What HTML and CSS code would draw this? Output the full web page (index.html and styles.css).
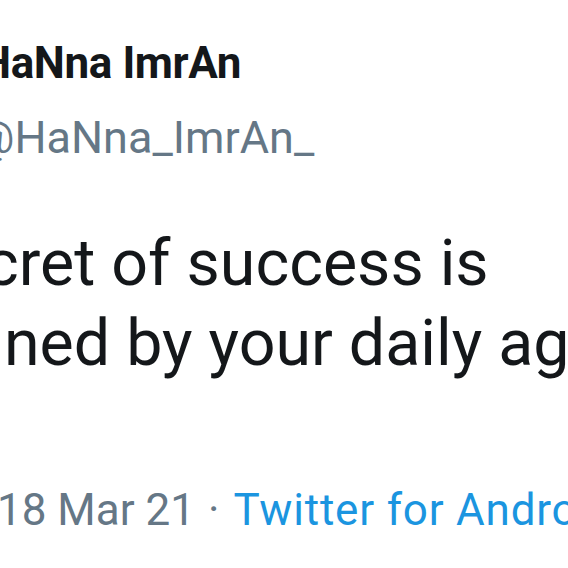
FILE: index.html
```html
<!DOCTYPE html>
<html>
<head>
<meta charset="utf-8">
<link rel="stylesheet" href="styles.css">
</head>
<body>
<article class="tweet">
  <header class="author">
    <div class="name">HaNna ImrAn</div>
    <div class="handle">@HaNna_ImrAn_</div>
  </header>
  <p class="text">
    <span class="line line1">cret of success is</span>
    <span class="line line2">ned by your daily agenda</span>
  </p>
  <div class="meta"><span class="date">18 Mar 21</span><span class="sep">·</span><span class="source">Twitter for Android</span></div>
</article>
</body>
</html>
```
FILE: styles.css
```css
html, body {
  margin: 0;
  padding: 0;
  background: #ffffff;
  overflow: hidden;
  width: 568px;
  height: 568px;
}
.tweet {
  padding-top: 33px;
  white-space: nowrap;
  font-family: Roboto, "Liberation Sans", sans-serif;
}
.author {
  display: flex;
  flex-direction: column;
  gap: 15px;
}
.name {
  font-weight: 700;
  font-size: 44px;
  letter-spacing: -0.4px;
  line-height: 60px;
  color: #14171a;
  margin-left: -20px;
}
.handle {
  font-size: 45px;
  line-height: 60px;
  color: #657786;
  margin-left: -26px;
}
.text {
  margin: 55px 0 0 0;
  font-size: 64.5px;
  line-height: 80px;
  color: #14171a;
}
.line {
  display: block;
}
.line1 {
  margin-left: -15px;
}
.line2 {
  margin-left: 4px;
}
.meta {
  margin-top: 97px;
  font-size: 44px;
  line-height: 60px;
  color: #657786;
  margin-left: -3px;
}
.sep {
  margin: 0 14px 0 13px;
}
.source {
  color: #1b95e0;
  letter-spacing: 0.8px;
}
```
